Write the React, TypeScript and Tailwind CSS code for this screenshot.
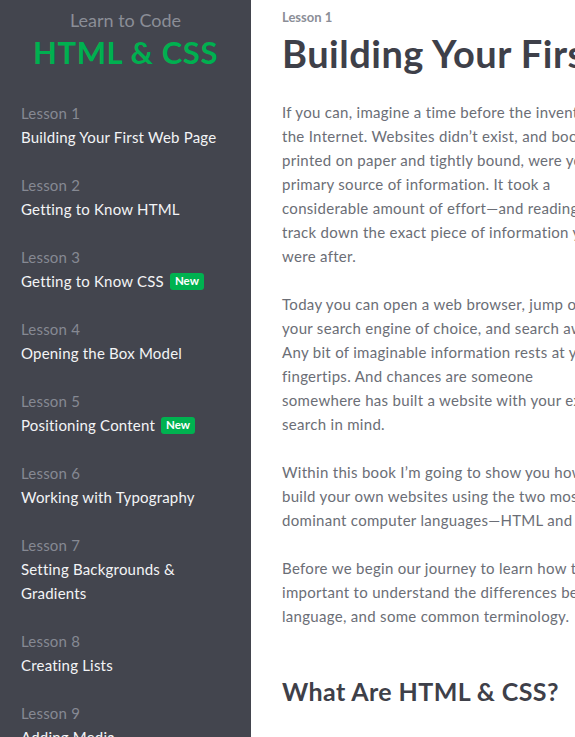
import React from "react";

const lessons = [
  { n: 1, title: ["Building Your First Web Page"] },
  { n: 2, title: ["Getting to Know HTML"] },
  { n: 3, title: ["Getting to Know CSS"], isNew: true },
  { n: 4, title: ["Opening the Box Model"] },
  { n: 5, title: ["Positioning Content"], isNew: true },
  { n: 6, title: ["Working with Typography"] },
  { n: 7, title: ["Setting Backgrounds &", "Gradients"] },
  { n: 8, title: ["Creating Lists"] },
  { n: 9, title: ["Adding Media"] },
  { n: 10, title: ["Building Forms"] },
];

const paragraphs = [
  [
    "If you can, imagine a time before the invention of",
    "the Internet. Websites didn\u2019t exist, and books,",
    "printed on paper and tightly bound, were your",
    "primary source of information. It took a",
    "considerable amount of effort\u2014and reading\u2014to",
    "track down the exact piece of information you",
    "were after.",
  ],
  [
    "Today you can open a web browser, jump over to",
    "your search engine of choice, and search away.",
    "Any bit of imaginable information rests at your",
    "fingertips. And chances are someone",
    "somewhere has built a website with your exact",
    "search in mind.",
  ],
  [
    "Within this book I\u2019m going to show you how to",
    "build your own websites using the two most",
    "dominant computer languages\u2014HTML and CSS.",
  ],
  [
    "Before we begin our journey to learn how to",
    "important to understand the differences between",
    "language, and some common terminology.",
  ],
];

function NewBadge() {
  return (
    <span className="ml-[6px] inline-flex h-[17px] items-center rounded-[3px] bg-[#00b250] px-[5px] text-[11.5px] font-bold leading-none tracking-normal text-white">
      New
    </span>
  );
}

export default function App() {
  return (
    <div
      className="flex h-[737px] w-full overflow-hidden bg-white"
      style={{ fontFamily: "Lato, 'Open Sans', sans-serif" }}
    >
      <aside className="w-[251px] shrink-0 overflow-hidden bg-[#43454e] pl-[21px]">
        <div className="-ml-[21px] pt-[8px] text-center">
          <div className="text-[18px] leading-[24px] text-[#8b8e97]">Learn to Code</div>
          <div className="mt-[2px] text-[31px] font-bold leading-[36px] tracking-[0.6px] text-[#00b050]">
            HTML &amp; CSS
          </div>
        </div>
        <ul className="mt-[31px] flex flex-col gap-[24px]">
          {lessons.map((l) => (
            <li key={l.n} className="text-[15px] leading-[24px] tracking-[0.2px]">
              <div className="text-[#868993]">Lesson {l.n}</div>
              {l.title.map((t, i) => (
                <div key={i} className="flex items-center whitespace-nowrap text-[#f3f4f6]">
                  {t}
                  {l.isNew && i === l.title.length - 1 && <NewBadge />}
                </div>
              ))}
            </li>
          ))}
        </ul>
      </aside>

      <main className="min-w-0 flex-1 overflow-hidden">
        <div className="w-[440px] pl-[31px] pt-[8px]">
          <div className="text-[13px] font-bold leading-[18px] text-[#8b8e97]">Lesson 1</div>
          <h1 className="mt-[5px] whitespace-nowrap text-[38px] font-bold leading-[44px] tracking-[0.5px] text-[#3e4049]">
            Building Your First Web Page
          </h1>
          <div className="mt-[25px] flex flex-col gap-[24px] text-[15px] leading-[24px] tracking-[0.3px] text-[#6b6e76]">
            {paragraphs.map((p, i) => (
              <p key={i}>
                {p.map((line, j) => (
                  <span key={j} className="block whitespace-nowrap">
                    {line}
                  </span>
                ))}
              </p>
            ))}
          </div>
          <h2 className="mt-[48px] text-[25px] font-bold leading-[30px] tracking-[0.4px] text-[#3e4049]">
            What Are HTML &amp; CSS?
          </h2>
        </div>
      </main>
    </div>
  );
}
